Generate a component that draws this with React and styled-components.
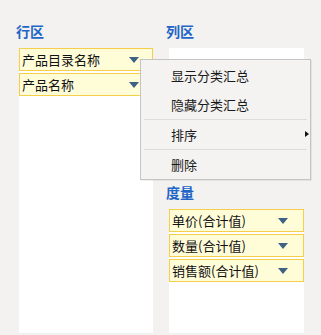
import React from "react";
import styled, { createGlobalStyle } from "styled-components";

const Global = createGlobalStyle`
  html, body { margin: 0; padding: 0; background: #f3f2f0; }
  body { font-family: "Noto Sans CJK SC", "Noto Sans", sans-serif; }
`;

const Page = styled.div`
  position: relative;
  width: 321px;
  height: 335px;
  overflow: hidden;
  background: #f3f2f0;
  box-sizing: border-box;
  padding: 22px 0 2px 16px;
  display: flex;
  gap: 13px;
`;

const Column = styled.div`
  width: ${(p) => p.$width}px;
  display: flex;
  flex-direction: column;
`;

const Title = styled.div`
  height: 18px;
  line-height: 18px;
  font-size: 14px;
  font-weight: bold;
  color: #1f66c6;
  margin-top: ${(p) => p.$top || 0}px;
  margin-bottom: 8px;
`;

const Panel = styled.div`
  margin-left: 3px;
  background: #ffffff;
  flex: ${(p) => (p.$height ? "none" : "1")};
  height: ${(p) => (p.$height ? `${p.$height}px` : "auto")};
  display: flex;
  flex-direction: column;
  gap: 2px;
`;

const Field = styled.div`
  height: 23px;
  box-sizing: border-box;
  border: 1px solid #f4cf4c;
  background: #fffcd8;
  display: flex;
  align-items: center;
  justify-content: space-between;
  padding: 0 ${(p) => p.$right}px 0 2px;
  font-size: 13px;
  color: #111;
  white-space: nowrap;
`;

const Caret = () => (
  <svg width="10" height="6" viewBox="0 0 10 6">
    <polygon points="0,0 10,0 5,6" fill="#3f6284" />
  </svg>
);

const Menu = styled.div`
  position: absolute;
  left: 140px;
  top: 59px;
  width: 171px;
  height: 121px;
  box-sizing: border-box;
  border: 1px solid #c4c4c4;
  box-shadow: 1px 1px 0 rgba(0, 0, 0, 0.06);
  background: #f4f3f1;
  padding-top: 1px;
  display: flex;
  flex-direction: column;
`;

const MenuItem = styled.div`
  position: relative;
  height: 29px;
  line-height: 29px;
  padding-left: 30px;
  font-size: 13px;
  color: #1a1a1a;
`;

const SubArrow = styled.span`
  position: absolute;
  right: 1px;
  top: 11px;
  width: 0;
  height: 0;
  border-top: 3.5px solid transparent;
  border-bottom: 3.5px solid transparent;
  border-left: 4px solid #111;
`;

const Separator = styled.div`
  height: 1px;
  margin: 0 3px;
  background: #dcdcdc;
`;

export default function App() {
  return (
    <>
      <Global />
      <Page>
        <Column $width={137}>
          <Title>行区</Title>
          <Panel>
            <Field $right={13}>
              产品目录名称
              <Caret />
            </Field>
            <Field $right={13}>
              产品名称
              <Caret />
            </Field>
          </Panel>
        </Column>
        <Column $width={138}>
          <Title>列区</Title>
          <Panel $height={128} />
          <Title $top={7}>度量</Title>
          <Panel>
            <Field $right={15}>
              单价(合计值)
              <Caret />
            </Field>
            <Field $right={15}>
              数量(合计值)
              <Caret />
            </Field>
            <Field $right={15}>
              销售额(合计值)
              <Caret />
            </Field>
          </Panel>
        </Column>
        <Menu>
          <MenuItem>显示分类汇总</MenuItem>
          <MenuItem>隐藏分类汇总</MenuItem>
          <Separator />
          <MenuItem>
            排序
            <SubArrow />
          </MenuItem>
          <Separator />
          <MenuItem>删除</MenuItem>
        </Menu>
      </Page>
    </>
  );
}
